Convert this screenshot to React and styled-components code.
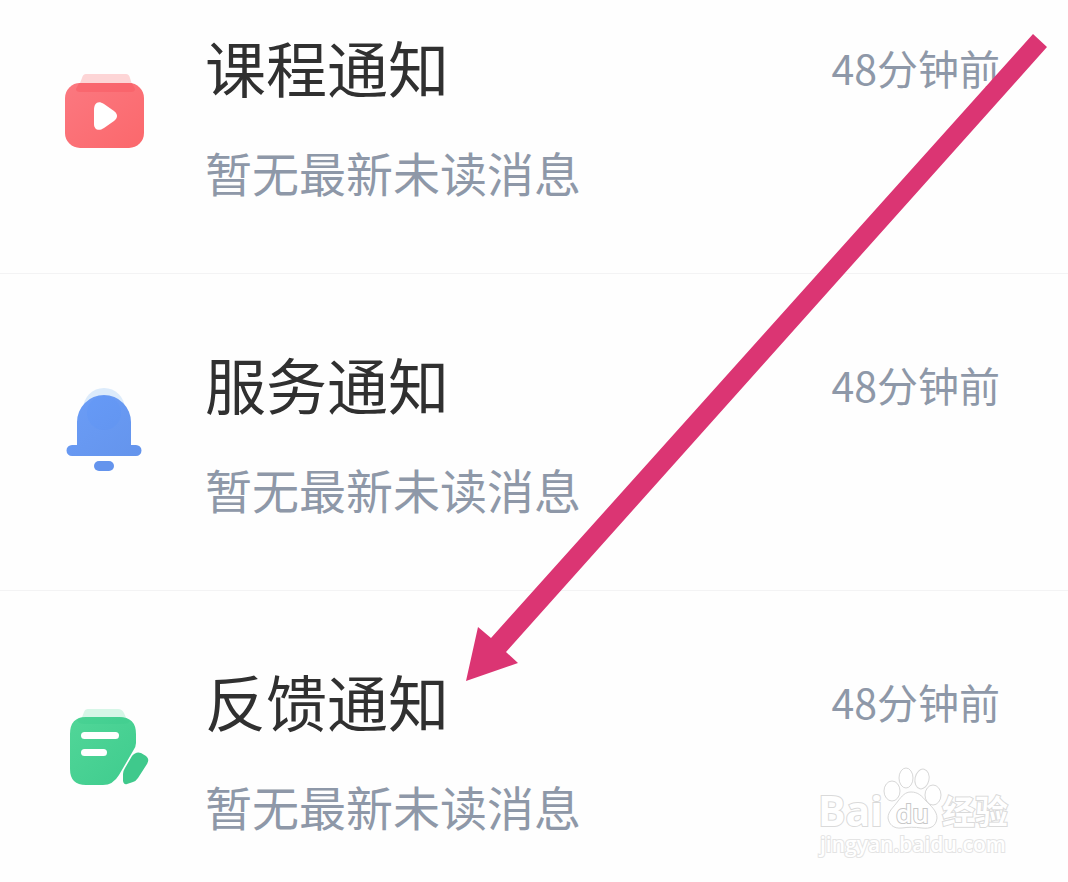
import React from "react";
import styled, { createGlobalStyle } from "styled-components";

const GlobalStyle = createGlobalStyle`
  *, *::before, *::after { box-sizing: border-box; }
  body {
    margin: 0;
    background: #fefefe;
    color: #303030;
    font-family: "Noto Sans CJK SC", "Noto Sans", sans-serif;
  }
`;

const Page = styled.main`
  position: relative;
  min-height: 100vh;
  overflow: hidden;
`;

const List = styled.ul`
  list-style: none;
  margin: 0;
  padding: 0;
`;

const Row = styled.li`
  display: flex;
  align-items: flex-start;
  gap: 53px;
  padding: 72px 68px 71px 56px;
  border-bottom: 1px solid #f3f3f4;

  &:first-child { padding-top: 29px; }
  &:last-child { border-bottom: 0; padding-bottom: 40px; }
`;

const Icon = styled.svg`
  flex: none;
  width: 96px;
  height: 96px;
  margin-top: 31px;
`;

const Body = styled.div`
  flex: 1;
  min-width: 0;
`;

const Heading = styled.div`
  display: flex;
  align-items: center;
  justify-content: space-between;
  height: 76px;
`;

const Title = styled.h2`
  margin: 0;
  font-size: 61px;
  line-height: 76px;
  font-weight: 400;
`;

const Time = styled.time`
  font-size: 41px;
  line-height: 76px;
  color: #8e98a8;
  white-space: nowrap;
`;

const Message = styled.p`
  margin: 37px 0 0;
  font-size: 47px;
  line-height: 60px;
  color: #8e98a8;
`;

const Arrow = styled.svg`
  position: absolute;
  left: 460px;
  top: 30px;
  width: 592px;
  height: 656px;
  pointer-events: none;
`;

const Watermark = styled.svg`
  position: absolute;
  right: 48px;
  top: 760px;
  width: 208px;
  height: 104px;
  pointer-events: none;
`;

const Mark = styled.text`
  font-family: "Open Sans", "Noto Sans CJK SC", sans-serif;
  font-size: ${({ $size }) => $size}px;
  font-weight: ${({ $weight = 700 }) => $weight};
  fill: #fff;
  stroke: ${({ $line = "#dadada" }) => $line};
  stroke-width: 2px;
  paint-order: stroke;
`;

const CourseIcon = () => (
  <Icon viewBox="0 0 96 96" aria-hidden="true">
    <defs>
      <linearGradient id="course" x1="0" y1="0" x2="1" y2="1">
        <stop offset="0" stopColor="#fb7880" />
        <stop offset="1" stopColor="#fb686c" />
      </linearGradient>
    </defs>
    <path d="M30 14H70Q73 14 74 18L77 28H22L26 18Q27 14 30 14Z" fill="#fdd5d6" />
    <rect x="9" y="23" width="79" height="65" rx="15" fill="url(#course)" />
    <path d="M23 23H76L79 29Q79 32 75 32H24Q20 32 20 29Z" fill="#f95d66" opacity=".6" />
    <path d="M38 50C38 43 42 40 48 44L58 51C62 54 62 58 58 61L48 68C42 72 38 69 38 64Z" fill="#fff" />
  </Icon>
);

const BellIcon = () => (
  <Icon viewBox="0 0 96 96" aria-hidden="true">
    <defs>
      <linearGradient id="bell" x1="0" y1="0" x2="1" y2="1">
        <stop offset="0" stopColor="#6b9df7" />
        <stop offset="1" stopColor="#6494ec" />
      </linearGradient>
    </defs>
    <circle cx="48" cy="32" r="21" fill="#dcebfb" />
    <path d="M21 68V45A27 27 0 0 1 75 45V68H80A5 5 0 0 1 80 79H16A5 5 0 0 1 16 68Z" fill="url(#bell)" />
    <circle cx="48" cy="36" r="17" fill="#5792f8" opacity=".2" />
    <rect x="38" y="84" width="20" height="10" rx="5" fill="#6494ed" />
  </Icon>
);

const FeedbackIcon = () => (
  <Icon viewBox="0 0 96 96" aria-hidden="true">
    <defs>
      <linearGradient id="feedback" x1="0" y1="0" x2="1" y2="1">
        <stop offset="0" stopColor="#51d698" />
        <stop offset="1" stopColor="#3fcc8e" />
      </linearGradient>
    </defs>
    <path d="M32 15H62Q66 15 68 19L71 26H25L28 18Q29 15 32 15Z" fill="#d6f6e7" />
    <path
      d="M30 23H63Q80 23 80 40V49Q80 53 77 57L63 81Q57 91 47 91H30Q14 91 14 75V40Q14 23 30 23Z"
      fill="url(#feedback)"
    />
    <path d="M28 23H65Q71 24 74 27Q72 30 66 30H28Q23 30 21 26Q24 23 28 23Z" fill="#39c98a" opacity=".3" />
    <rect x="25" y="38" width="38" height="7" rx="3.5" fill="#fff" />
    <rect x="25" y="55" width="26" height="7" rx="3.5" fill="#fff" />
    <path
      d="M76 62Q80 57 85 59L90 62Q94 65 91 70L82 84Q80 87 77 88L71 90Q68 91 67 87V80Q67 77 69 74Z"
      fill="#3fc98c"
    />
  </Icon>
);

const notices = [
  { title: "课程通知", icon: <CourseIcon /> },
  { title: "服务通知", icon: <BellIcon /> },
  { title: "反馈通知", icon: <FeedbackIcon /> },
];

export default function App() {
  return (
    <Page>
      <GlobalStyle />
      <List>
        {notices.map(({ title, icon }) => (
          <Row key={title}>
            {icon}
            <Body>
              <Heading>
                <Title>{title}</Title>
                <Time>48分钟前</Time>
              </Heading>
              <Message>暂无最新未读消息</Message>
            </Body>
          </Row>
        ))}
      </List>
      <Arrow viewBox="460 30 592 656" aria-hidden="true">
        <path d="M1033 34L1047 47L506 652L518 663L466 681L478 627L491 638Z" fill="#db3573" />
      </Arrow>
      <Watermark viewBox="812 760 208 104" role="img" aria-label="Baidu 经验">
        <Mark x="818" y="826" $size={41}>Bai</Mark>
        <Mark x="942" y="824" $size={33}>经验</Mark>
        <Mark x="820" y="852" $size={21} $weight={600} $line="#e4e4e4">jingyan.baidu.com</Mark>
        <g fill="#fff" stroke="#d8d8d8" strokeWidth="1">
          <ellipse cx="892" cy="791" rx="8" ry="10" />
          <ellipse cx="906" cy="778" rx="7" ry="10" />
          <ellipse cx="922" cy="779" rx="7" ry="10" transform="rotate(12 922 779)" />
          <ellipse cx="933" cy="795" rx="8" ry="10" />
          <path d="M911 792C918 792 922 796 926 801C931 806 937 811 937 818C936 827 930 829 922 828C914 827 909 827 902 828C893 829 889 824 888 818C888 811 894 807 898 801C902 796 905 792 911 792Z" />
        </g>
        <Mark x="896" y="823" $size={26} $weight={600} $line="#c8c8c8">du</Mark>
      </Watermark>
    </Page>
  );
}
